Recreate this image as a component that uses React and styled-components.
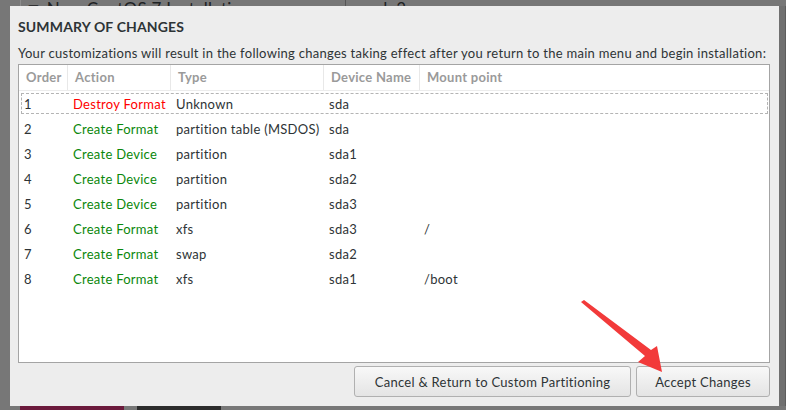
import React from 'react'
import styled, { createGlobalStyle } from 'styled-components'

const Global = createGlobalStyle`
  html, body { margin: 0; padding: 0; background: #777; }
  * { box-sizing: border-box; }
`

const Page = styled.div`
  position: relative;
  width: 786px;
  height: 410px;
  overflow: hidden;
  background: #777;
  display: flex;
  flex-direction: column;
  font-family: Lato, "Liberation Sans", sans-serif;
  letter-spacing: 0.28px;
  color: #2e3436;
`

const TopStrip = styled.div`
  height: 6px;
  overflow: hidden;
  display: flex;
  padding-left: 20px;
`
const TopPane = styled.div`
  width: ${({ w }) => w}px;
  border-left: 1px solid ${({ edge }) => edge};
  padding-left: ${({ pad }) => pad}px;
  font-size: 17px;
  line-height: 17px;
  margin-top: -8px;
  color: #1e2224;
  white-space: nowrap;
  height: 14px;
  padding-top: 8px;
`

const Middle = styled.div`
  display: flex;
  height: 400px;
`
const Dialog = styled.div`
  margin-left: 10px;
  width: 769px;
  background: #ededed;
  padding: 0 9px 9px 8px;
  display: flex;
  flex-direction: column;
`
const RightEdge = styled.div`
  flex: 1;
  background: #707070;
  border-right: 1px solid #5e5e5e;
`
const Title = styled.h1`
  margin: 0;
  padding-top: 13px;
  font-size: 14px;
  line-height: 16px;
  font-weight: 700;
  letter-spacing: 0.15px;
  color: #2e3436;
`
const Intro = styled.p`
  margin: 10px 0 0;
  font-size: 13px;
  line-height: 16px;
  white-space: nowrap;
`
const TableBox = styled.div`
  margin-top: 3px;
  height: 299px;
  background: #fff;
  border: 1px solid #a4a4a4;
  display: flex;
  flex-direction: column;
`
const cols = '49px 103px 153px 96px 1fr'
const HeaderRow = styled.div`
  display: grid;
  grid-template-columns: ${cols};
  height: 26px;
  border-bottom: 1px solid #ececec;
`
const HeadCell = styled.div`
  padding-left: 7px;
  font-size: 13px;
  font-weight: 700;
  color: #9a9a9a;
  line-height: 25px;
  white-space: nowrap;
  border-right: ${({ last }) => (last ? 'none' : '1px solid #e8e8e8')};
`
const Row = styled.div`
  padding: 2px 1px 2px 2px;
`
const RowInner = styled.div`
  display: grid;
  grid-template-columns: 46px 103px 153px 96px 1fr;
  height: 21px;
  border: 1px dashed ${({ focused }) => (focused ? '#b4b4b4' : 'transparent')};
  align-items: center;
  font-size: 13px;
`
const Cell = styled.div`
  padding-left: ${({ pad }) => pad}px;
  padding-top: 1px;
  white-space: nowrap;
  color: ${({ tone }) => tone || '#2e3436'};
`

const Buttons = styled.div`
  margin-top: 3px;
  display: flex;
  justify-content: flex-end;
  gap: 5px;
`
const Button = styled.button`
  width: ${({ w }) => w}px;
  height: 31px;
  border: 1px solid #b0b0b0;
  border-radius: 3px;
  background: linear-gradient(#f8f8f8, #e4e4e4);
  font-family: inherit;
  letter-spacing: inherit;
  font-size: 13px;
  color: #2e3436;
  padding: 0;
`

const BottomStrip = styled.div`
  display: flex;
  padding-left: 20px;
  gap: 13px;
  flex: 1;
`
const Block = styled.div`
  width: ${({ w }) => w}px;
  background: ${({ bg }) => bg};
`

const Arrow = styled.svg`
  position: absolute;
  left: 0;
  top: 0;
  pointer-events: none;
`

const RED = '#ff0000'
const GREEN = '#0a870a'

const rows = [
  ['1', 'Destroy Format', RED, 'Unknown', 'sda', ''],
  ['2', 'Create Format', GREEN, 'partition table (MSDOS)', 'sda', ''],
  ['3', 'Create Device', GREEN, 'partition', 'sda1', ''],
  ['4', 'Create Device', GREEN, 'partition', 'sda2', ''],
  ['5', 'Create Device', GREEN, 'partition', 'sda3', ''],
  ['6', 'Create Format', GREEN, 'xfs', 'sda3', '/'],
  ['7', 'Create Format', GREEN, 'swap', 'sda2', ''],
  ['8', 'Create Format', GREEN, 'xfs', 'sda1', '/boot'],
]

export default function App() {
  return (
    <Page>
      <Global />
      <TopStrip>
        <TopPane w={325} edge="#8c8c8c" pad={4}>▼ New CentOS 7 Installation</TopPane>
        <TopPane w={300} edge="#555" pad={24}>sda3</TopPane>
      </TopStrip>
      <Middle>
        <Dialog>
          <Title>SUMMARY OF CHANGES</Title>
          <Intro>
            Your customizations will result in the following changes taking effect after you return to the main menu and begin installation:
          </Intro>
          <TableBox>
            <HeaderRow>
              <HeadCell>Order</HeadCell>
              <HeadCell>Action</HeadCell>
              <HeadCell>Type</HeadCell>
              <HeadCell>Device Name</HeadCell>
              <HeadCell last>Mount point</HeadCell>
            </HeaderRow>
            {rows.map(([n, action, tone, type, dev, mount], i) => (
              <Row key={n}>
                <RowInner focused={i === 0}>
                  <Cell pad={2}>{n}</Cell>
                  <Cell pad={5} tone={tone}>{action}</Cell>
                  <Cell pad={5}>{type}</Cell>
                  <Cell pad={5}>{dev}</Cell>
                  <Cell pad={4}>{mount}</Cell>
                </RowInner>
              </Row>
            ))}
          </TableBox>
          <Buttons>
            <Button w={277}>Cancel &amp; Return to Custom Partitioning</Button>
            <Button w={134}>Accept Changes</Button>
          </Buttons>
        </Dialog>
        <RightEdge />
      </Middle>
      <BottomStrip>
        <Block w={104} bg="#6b1a3c" />
        <Block w={84} bg="#2c2c2c" />
      </BottomStrip>
      <Arrow width="786" height="410" viewBox="0 0 786 410">
        <polygon
          points="581,302 584,300 651,350 657,346 662,372 638,362 645,356"
          fill="#f23a3a"
        />
      </Arrow>
    </Page>
  )
}
